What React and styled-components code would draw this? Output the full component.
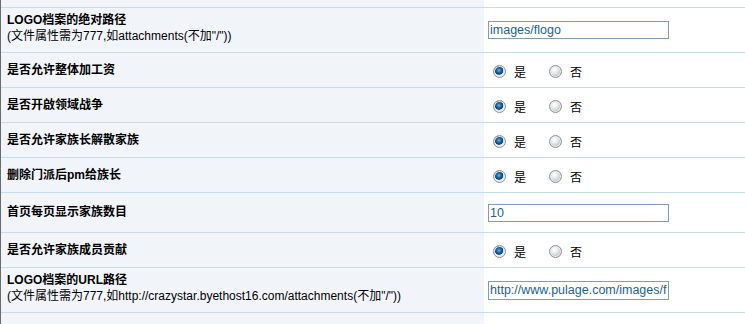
import React from 'react';
import styled, { createGlobalStyle } from 'styled-components';

const GlobalStyle = createGlobalStyle`
    html, body {
        margin: 0;
        padding: 0;
        background: #fff;
    }
    body {
        font-family: "Liberation Sans", "Noto Sans CJK SC", sans-serif;
        font-size: 12px;
        color: #000;
    }
`;

const Viewport = styled.div`
    width: 745px;
    height: 324px;
    overflow: hidden;
`;

/* the table is scrolled: the row above the first full one is cut off */
const Table = styled.div`
    margin-top: -37px;
    border-left: 1px solid #6b6b6b;
`;

const Row = styled.div`
    display: grid;
    grid-template-columns: 483px 1fr;
    height: ${props => props.h}px;
    border-bottom: 1px solid #c6dbea;
`;

const LabelCell = styled.div`
    background: #f1f5fa;
    padding: ${props => (props.sub ? '5px 6px 0' : '0 6px')};
    display: flex;
    flex-direction: column;
    justify-content: ${props => (props.sub ? 'flex-start' : 'center')};
`;

const Title = styled.div`
    font-weight: bold;
    line-height: 15px;
    white-space: nowrap;
`;

const Sub = styled.div`
    line-height: 16px;
    white-space: nowrap;
`;

const ValueCell = styled.div`
    background: #fff;
    display: flex;
    align-items: center;
    padding-left: 4px;
    overflow: hidden;
`;

const TextInput = styled.input`
    box-sizing: border-box;
    width: 181px;
    height: ${props => props.h || 18}px;
    margin: 0;
    padding: 0 1px;
    border: 1px solid #7f9db9;
    font-family: "Liberation Sans", sans-serif;
    font-size: 12.5px;
    color: #1d5f93;
    background: #fff;
    outline: none;
`;

const RadioGroup = styled.div`
    display: flex;
    align-items: center;
    padding-left: 5px;
    margin-top: 2px;
`;

const RadioLabel = styled.label`
    display: flex;
    align-items: center;
    margin-right: ${props => (props.first ? '23px' : '0')};
    font-family: "Noto Sans CJK SC", sans-serif;
    font-size: 12px;
`;

const RadioDot = styled.span`
    box-sizing: border-box;
    width: 13px;
    height: 13px;
    border-radius: 50%;
    border: 1px solid #8e9398;
    margin-right: 8px;
    background: ${props =>
        props.checked
            ? 'radial-gradient(circle at 45% 40%, #6fb6e8 0, #1b73b3 2px, #0b3e6e 4px, #dfe3e6 4.6px, #f4f5f6 6px)'
            : 'radial-gradient(circle at 40% 35%, #ffffff 0, #eceded 3px, #c9cbcd 6px)'};
    box-shadow: inset 0 0 0 1px #e9ebec;
`;

const Radio = ({ checked, label, first }) => (
    <RadioLabel first={first}>
        <RadioDot checked={checked} />
        {label}
    </RadioLabel>
);

const YesNo = () => (
    <RadioGroup>
        <Radio checked first label="是" />
        <Radio label="否" />
    </RadioGroup>
);

const rows = [
    { h: 44, title: 'LOGO档案的URL路径', sub: '(文件属性需为777,如http://crazystar.byethost16.com/attachments(不加"/"))', input: '' },
    { h: 44, title: 'LOGO档案的绝对路径', sub: '(文件属性需为777,如attachments(不加"/"))', input: 'images/flogo' },
    { h: 34, title: '是否允许整体加工资' },
    { h: 34, title: '是否开啟领域战争' },
    { h: 34, title: '是否允许家族长解散家族' },
    { h: 34, title: '删除门派后pm给族长' },
    { h: 39, title: '首页每页显示家族数目', input: '10' },
    { h: 34, title: '是否允许家族成员贡献' },
    { h: 44, title: 'LOGO档案的URL路径', sub: '(文件属性需为777,如http://crazystar.byethost16.com/attachments(不加"/"))', input: 'http://www.pulage.com/images/flogo', inputH: 19 },
    { h: 44, title: '允许上传门派LOGO' },
];

const App = () => (
    <Viewport>
        <GlobalStyle />
        <Table>
            {rows.map((r, i) => (
                <Row key={i} h={r.h}>
                    <LabelCell sub={!!r.sub}>
                        <Title>{r.title}</Title>
                        {r.sub && <Sub>{r.sub}</Sub>}
                    </LabelCell>
                    <ValueCell>
                        {r.input !== undefined
                            ? <TextInput h={r.inputH} defaultValue={r.input} readOnly />
                            : <YesNo />}
                    </ValueCell>
                </Row>
            ))}
        </Table>
    </Viewport>
);

export default App;
